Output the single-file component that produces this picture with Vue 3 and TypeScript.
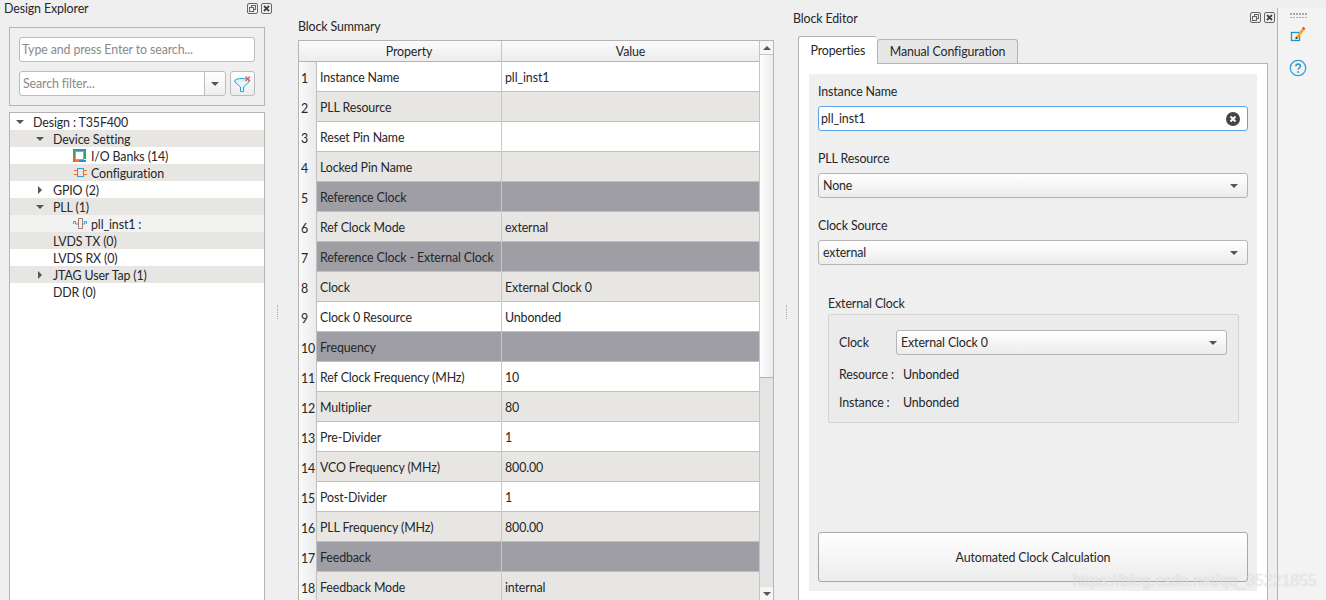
<script setup lang="ts">
interface TreeRow { label: string; indent: number; arrow?: 'down' | 'right'; icon?: 'bank' | 'config' | 'pll'; alt: boolean; soft?: boolean }
const tree: TreeRow[] = [
  { label: 'Design : T35F400', indent: 0, arrow: 'down', alt: false },
  { label: 'Device Setting', indent: 1, arrow: 'down', alt: true },
  { label: 'I/O Banks (14)', indent: 2, icon: 'bank', alt: false },
  { label: 'Configuration', indent: 2, icon: 'config', alt: true },
  { label: 'GPIO (2)', indent: 1, arrow: 'right', alt: false },
  { label: 'PLL (1)', indent: 1, arrow: 'down', alt: true },
  { label: 'pll_inst1 :', indent: 2, icon: 'pll', alt: false, soft: true },
  { label: 'LVDS TX (0)', indent: 1, alt: true },
  { label: 'LVDS RX (0)', indent: 1, alt: false },
  { label: 'JTAG User Tap (1)', indent: 1, arrow: 'right', alt: true },
  { label: 'DDR (0)', indent: 1, alt: false },
]
interface Row { p: string; v: string; section?: boolean }
const rows: Row[] = [
  { p: 'Instance Name', v: 'pll_inst1' },
  { p: 'PLL Resource', v: '' },
  { p: 'Reset Pin Name', v: '' },
  { p: 'Locked Pin Name', v: '' },
  { p: 'Reference Clock', v: '', section: true },
  { p: 'Ref Clock Mode', v: 'external' },
  { p: 'Reference Clock - External Clock', v: '', section: true },
  { p: 'Clock', v: 'External Clock 0' },
  { p: 'Clock 0 Resource', v: 'Unbonded' },
  { p: 'Frequency', v: '', section: true },
  { p: 'Ref Clock Frequency (MHz)', v: '10' },
  { p: 'Multiplier', v: '80' },
  { p: 'Pre-Divider', v: '1' },
  { p: 'VCO Frequency (MHz)', v: '800.00' },
  { p: 'Post-Divider', v: '1' },
  { p: 'PLL Frequency (MHz)', v: '800.00' },
  { p: 'Feedback', v: '', section: true },
  { p: 'Feedback Mode', v: 'internal' },
]
</script>

<template>
  <div class="app">
    <section class="left">
      <header class="dock-title">
        <span>Design Explorer</span>
        <span class="dock-btns">
          <svg viewBox="0 0 11 11" class="dock-btn"><rect x=".5" y=".5" width="10" height="10" rx="1.500" fill="none" stroke="#666"/><rect x="4.500" y="2.500" width="4" height="4" fill="none" stroke="#666"/><rect x="2.500" y="4.500" width="4" height="4" fill="#efefef" stroke="#666"/></svg>
          <svg viewBox="0 0 11 11" class="dock-btn"><rect x=".5" y=".5" width="10" height="10" rx="1.500" fill="none" stroke="#666"/><path d="M3 3l5 5M8 3l-5 5" stroke="#444" stroke-width="1.800"/></svg>
        </span>
      </header>
      <div class="search-box">
        <div class="input ph">Type and press Enter to search...</div>
        <div class="filter-row">
          <div class="combo-filter">
            <span class="ph">Search filter...</span>
            <span class="combo-arrow"><i class="tri"></i></span>
          </div>
          <button class="filter-btn">
            <svg viewBox="0 0 21 21" width="21" height="21"><ellipse cx="10" cy="8" rx="7.500" ry="2.500" fill="#d8f0fa" stroke="#2fa3d6"/><path d="M3 9l5.500 5v4.500h3V14L17 9" fill="#e6f6fc" stroke="#2fa3d6"/><path d="M13.500 3.500l4.500 4.500M18 3.500L13.500 8" stroke="#e8604c" stroke-width="1.500"/></svg>
          </button>
        </div>
      </div>
      <div class="tree">
        <div v-for="r in tree" :key="r.label" class="tree-row" :class="[`lvl${r.indent}`, { alt: r.alt, soft: r.soft }]">
          <span class="twist">
            <i v-if="r.arrow === 'down'" class="tri"></i>
            <i v-else-if="r.arrow === 'right'" class="tri-r"></i>
          </span>
          <span v-if="r.icon" class="node-icon">
            <svg v-if="r.icon === 'bank'" viewBox="0 0 13 13" width="13" height="13"><rect x="2.500" y="2.500" width="8" height="8" fill="#fff" stroke="#a0a0a8"/><path d="M1 0v7" stroke="#3aa655" stroke-width="2"/><path d="M1 7v6" stroke="#e0603a" stroke-width="2"/><path d="M2 1h11" stroke="#2f8fd0" stroke-width="2"/><path d="M12 2v8" stroke="#3aa655" stroke-width="2"/><path d="M2 12h4" stroke="#e0803a" stroke-width="2"/><path d="M6 12h7" stroke="#2f8fd0" stroke-width="2"/></svg>
            <svg v-else-if="r.icon === 'config'" viewBox="0 0 14 13" width="14" height="13"><rect x="4.500" y="2.500" width="6" height="8" fill="none" stroke="#2fa3d6"/><path d="M1 4.500h3M1 8.500h3M11 4.500h3M11 8.500h3" stroke="#e8703a"/></svg>
            <svg v-else viewBox="0 0 14 13" width="14" height="13"><rect x="5.500" y="1.500" width="4" height="10" fill="none" stroke="#b07a70"/><path d="M.5 7V4.500h2V7h3M9.500 7h2V4.500h2V7" fill="none" stroke="#2fa3d6"/></svg>
          </span>
          <span class="tree-label">{{ r.label }}</span>
        </div>
      </div>
    </section>

    <div class="splitter"><i></i></div>

    <section class="center">
      <h2 class="center-title">Block Summary</h2>
      <div class="table-wrap">
        <div class="table">
          <div class="thead">
            <div class="corner"></div>
            <div class="th">Property</div>
            <div class="th last">Value</div>
          </div>
          <div v-for="(r, i) in rows" :key="r.p" class="tr" :class="{ even: i % 2 === 1, section: r.section }">
            <div class="num">{{ i + 1 }}</div>
            <div class="td">{{ r.p }}</div>
            <div class="td last">{{ r.v }}</div>
          </div>
        </div>
        <div class="scrollbar">
          <div class="sb-btn"><i class="tri-u"></i></div>
          <div class="sb-thumb"></div>
          <div class="sb-track"></div>
          <div class="sb-btn"><i class="tri"></i></div>
        </div>
      </div>
    </section>

    <div class="splitter two"><i></i></div>

    <section class="right">
      <header class="right-title">
        <span>Block Editor</span>
        <span class="dock-btns">
          <svg viewBox="0 0 11 11" class="dock-btn"><rect x=".5" y=".5" width="10" height="10" rx="1.500" fill="none" stroke="#666"/><rect x="4.500" y="2.500" width="4" height="4" fill="none" stroke="#666"/><rect x="2.500" y="4.500" width="4" height="4" fill="#efefef" stroke="#666"/></svg>
          <svg viewBox="0 0 11 11" class="dock-btn"><rect x=".5" y=".5" width="10" height="10" rx="1.500" fill="none" stroke="#666"/><path d="M3 3l5 5M8 3l-5 5" stroke="#444" stroke-width="1.800"/></svg>
        </span>
      </header>
      <div class="tabs">
        <div class="tab active">Properties</div>
        <div class="tab">Manual Configuration</div>
      </div>
      <div class="pane">
        <div class="form">
          <label class="lbl">Instance Name</label>
          <div class="input focus">
            <span>pll_inst1</span>
            <svg class="clear" viewBox="0 0 14 14" width="14" height="14"><circle cx="7" cy="7" r="7" fill="#444"/><path d="M4.500 4.500l5 5M9.500 4.500l-5 5" stroke="#fff" stroke-width="2"/></svg>
          </div>
          <label class="lbl gap">PLL Resource</label>
          <div class="combo"><span>None</span><i class="tri"></i></div>
          <label class="lbl gap">Clock Source</label>
          <div class="combo"><span>external</span><i class="tri"></i></div>
          <div class="ext">
            <div class="ext-title">External Clock</div>
            <div class="ext-box">
              <div class="ext-row">
                <span class="clock-lbl">Clock</span>
                <div class="combo fill"><span>External Clock 0</span><i class="tri"></i></div>
              </div>
              <div class="info first"><span class="info-k">Resource :</span><span>Unbonded</span></div>
              <div class="info"><span class="info-k">Instance :</span><span>Unbonded</span></div>
            </div>
          </div>
          <button class="auto">Automated Clock Calculation</button>
        </div>
      </div>
    </section>

    <aside class="toolbar">
      <div class="grip"></div>
      <svg class="tool" viewBox="0 0 16 16" width="16" height="16"><rect x="1.500" y="6.500" width="8" height="8" fill="none" stroke="#1f93cf" stroke-width="1.300"/><path d="M6 10.500l6-8 2.200 1.700-6 8z" fill="#f5a623"/><path d="M12 2.500l1.200-1.800 2.200 1.500-1.200 2z" fill="#e8453c"/><path d="M5.800 10.500l2.200 1.800-2.600 1z" fill="#222"/></svg>
      <svg class="tool help" viewBox="0 0 18 18" width="18" height="18"><circle cx="9" cy="9" r="7.700" fill="none" stroke="#2fa3d6" stroke-width="1.300"/><path d="M6.800 7.200c0-3 4.600-3 4.600 0 0 1.700-2.400 1.800-2.400 3.600" fill="none" stroke="#2f8fc6" stroke-width="1.400"/><rect x="8.200" y="12.200" width="1.600" height="1.700" fill="#2f8fc6"/></svg>
    </aside>

    <div class="watermark">https://blog.csdn.net/qq_35221855</div>
  </div>
</template>

<style scoped>
.app {
  position: relative;
  display: flex;
  height: 600px;
  overflow: hidden;
  background: #efefef;
  color: #26262a;
  font: 12.4px/17px Lato, "Noto Sans", sans-serif;
  letter-spacing: -0.12px;
}
.dock-btns { display: flex; gap: 3px; margin-left: auto; }
.dock-btn { width: 11px; height: 11px; }

.left { width: 272px; flex: none; }
.dock-title { display: flex; align-items: center; height: 17px; padding-left: 4px; }
.search-box {
  margin: 10px 0 0 9px;
  width: 256px;
  height: 79px;
  box-sizing: border-box;
  border: 1px solid #b4b4b4;
  padding: 9px;
}
.input {
  display: flex;
  align-items: center;
  height: 25px;
  box-sizing: border-box;
  border: 1px solid #bcbcbc;
  border-radius: 3px;
  background: #fff;
  padding: 0 2px;
}
.ph { color: #8a8a8a; }
.filter-row { display: flex; gap: 4px; margin-top: 9px; }
.combo-filter {
  flex: 1;
  display: flex;
  align-items: center;
  height: 25px;
  box-sizing: border-box;
  border: 1px solid #bcbcbc;
  border-radius: 3px;
  background: #fff;
  padding-left: 3px;
}
.combo-arrow {
  margin-left: auto;
  width: 20px;
  height: 100%;
  border-left: 1px solid #bcbcbc;
  display: flex;
  align-items: center;
  justify-content: center;
  background: linear-gradient(#fff, #eee);
  border-radius: 0 3px 3px 0;
}
.filter-btn {
  width: 25px;
  height: 25px;
  padding: 1px;
  border: 1px solid #bcbcbc;
  border-radius: 3px;
  background: linear-gradient(#fff, #ececec);
}
.tri, .tri-r, .tri-u { display: block; width: 0; height: 0; border-style: solid; border-color: transparent; }
.tri { border-width: 4px 4px 0; border-top-color: #555; }
.tri-u { border-width: 0 4px 4px; border-bottom-color: #555; }
.tri-r { border-width: 4px 0 4px 4px; border-left-color: #555; }

.tree {
  margin: 6px 0 0 9px;
  width: 256px;
  height: 500px;
  box-sizing: border-box;
  border: 1px solid #b4b4b4;
  background: #fff;
}
.tree-row { display: flex; align-items: center; height: 17px; padding-left: 6px; }
.tree-row.alt { background: #e7e6e2; }
.tree-row.soft { background: #f2f2f2; }
.tree-label { margin-top: 2px; line-height: 15px; }
.twist { width: 8px; display: flex; justify-content: center; margin-right: 9px; }
.lvl1 { padding-left: 26px; }
.lvl2 { padding-left: 46px; }
.node-icon { display: flex; width: 14px; margin-right: 4px; }

.splitter { width: 26px; flex: none; position: relative; }
.splitter i {
  position: absolute;
  left: 5px;
  top: 305px;
  height: 14px;
  border-left: 1px dotted #aaa;
}
.splitter.two { width: 14px; }
.splitter.two i { left: 12px; }
.center { width: 476px; flex: none; }
.center-title { margin: 0; padding-top: 18px; font-size: inherit; font-weight: 400; line-height: 17px; height: 22px; }
.table-wrap {
  display: flex;
  width: 476px;
  height: 600px;
  box-sizing: border-box;
  border: 1px solid #b4b4b4;
  border-bottom: 0;
}
.table { width: 460px; flex: none; }
.thead { display: grid; grid-template-columns: 18px 185px 1fr; height: 21px; background: linear-gradient(#fbfbfb, #ececec); border-bottom: 1px solid #b4b4b4; box-sizing: border-box; }
.th { text-align: center; line-height: 20px; padding-top: 1px; border-right: 1px solid #c4c4c4; }
.th.last { border-right: 0; }
.tr { display: grid; grid-template-columns: 18px 185px 1fr; height: 30px; box-sizing: border-box; border-bottom: 1px solid #c0c0c0; background: #fff; }
.tr.even { background: #e7e6e2; }
.tr.section { background: #9f9ea4; }
.num { background: linear-gradient(90deg, #fafafa, #ebebeb); border-right: 1px solid #c0c0c0; padding-left: 2px; padding-top: 1px; line-height: 31px; }
.td { padding: 1px 0 0 3px; line-height: 29px; border-right: 1px solid #c8c8c8; white-space: nowrap; overflow: hidden; }
.td.last { border-right: 0; }
.scrollbar { flex: 1; display: flex; flex-direction: column; background: #f0f0f0; border-left: 1px solid #c4c4c4; height: 559px; }
.sb-btn { height: 13px; flex: none; display: flex; align-items: center; justify-content: center; background: #f6f6f6; }
.sb-thumb { height: 324px; flex: none; background: linear-gradient(90deg, #fdfdfd, #ececec); border-top: 1px solid #c4c4c4; border-bottom: 1px solid #b4b4b4; box-sizing: border-box; }
.sb-track { flex: 1; background: #e4e4e4; }

.right { width: 490px; flex: none; position: relative; }
.right-title { display: flex; align-items: center; height: 17px; padding: 10px 3px 0 5px; box-sizing: content-box; }
.right-title .dock-btns { margin-right: 0; margin-top: -3px; }
.tabs { display: flex; align-items: flex-end; height: 27px; margin-left: 10px; margin-top: 9px; }
.tab {
  height: 24px;
  box-sizing: border-box;
  border: 1px solid #b4b4b4;
  border-bottom: 0;
  border-radius: 3px 3px 0 0;
  background: #e7e7e7;
  padding: 0 12px;
  line-height: 24px;
}
.tab.active {
  height: 28px;
  background: #fff;
  line-height: 27px;
  margin-bottom: -1px;
  position: relative;
  z-index: 1;
  border-right: 0;
  padding: 0 11.5px;
}
.pane {
  margin-left: 10px;
  width: 470px;
  height: 600px;
  box-sizing: border-box;
  border: 1px solid #b4b4b4;
  background: #fff;
  padding: 10px;
}
.form { width: 448px; height: 517px; background: #efefef; box-sizing: border-box; padding: 9px 9px 0; display: flex; flex-direction: column; }
.lbl { height: 17px; line-height: 17px; margin-bottom: 6px; flex: none; }
.lbl.gap { margin-top: 19px; }
.input.focus { flex: none; border-color: #5aa5e8; }
.clear { margin-left: auto; margin-right: 5px; }
.combo {
  display: flex;
  align-items: center;
  justify-content: space-between;
  height: 25px;
  flex: none;
  box-sizing: border-box;
  border: 1px solid #b4b4b4;
  border-radius: 3px;
  background: linear-gradient(#fff, #ececec);
  padding: 0 9px 0 4px;
}
.ext { margin: 30px 0 0 10px; width: 411px; }
.ext-title { height: 17px; line-height: 17px; }
.ext-box { margin-top: 2px; height: 109px; box-sizing: border-box; border: 1px solid #d4d4d4; border-radius: 2px; background: #ebebeb; padding: 15px 11px 0 10px; }
.ext-row { display: flex; align-items: center; }
.clock-lbl { width: 57px; }
.fill { flex: 1; }
.info { display: flex; height: 28px; line-height: 28px; }
.info.first { margin-top: 6px; }
.info-k { width: 64px; flex: none; }
.auto {
  margin-top: auto;
  margin-bottom: 9px;
  height: 50px;
  flex: none;
  font: inherit;
  letter-spacing: inherit;
  color: inherit;
  border: 1px solid #a8a8a8;
  border-radius: 3px;
  background: linear-gradient(#fff, #ececec);
}

.toolbar {
  flex: 1;
  margin-left: -1px;
  margin-top: 8px;
  padding-right: 8px;
  border-left: 1px solid #b4b4b4;
  background: #f3f3f3;
  display: flex;
  flex-direction: column;
  align-items: center;
  position: relative;
}
.grip {
  width: 17px;
  height: 5px;
  margin-top: 5px;
  flex: none;
  background: radial-gradient(circle at 1px 1px, #aaa 1px, transparent 1px) 0 0 / 3px 4px;
}
.tool { margin-top: 8px; flex: none; }
.tool.help { margin-top: 17px; }
.watermark {
  position: absolute;
  left: 1073px;
  top: 572px;
  font: 15.9px/18px "Liberation Sans", sans-serif;
  letter-spacing: 0;
  color: rgba(255, 255, 255, 0.55);
  text-shadow: 0 0 1px rgba(120, 120, 120, 0.35);
  white-space: nowrap;
}
</style>
